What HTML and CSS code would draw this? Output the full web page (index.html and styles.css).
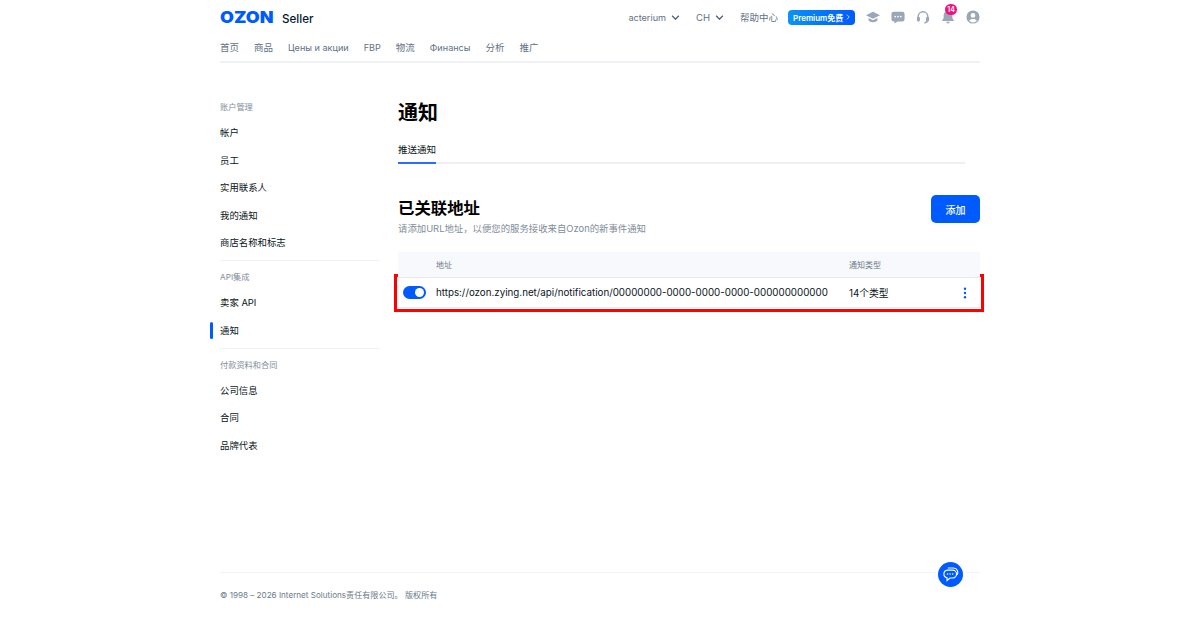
FILE: index.html
```html
<!DOCTYPE html>
<html lang="zh">

<head>
    <meta charset="UTF-8">
    <title>通知</title>
    <link rel="stylesheet" href="styles.css">
</head>

<body>
    <div class="page">
        <header class="top-bar">
            <div class="logo"><span class="logo-ozon">OZON</span><span class="logo-seller">Seller</span></div>
            <div class="top-right">
                <span class="top-link"><span class="latin">acterium</span>
                    <svg class="chevron" viewBox="0 0 10 6"><path d="M1 1l4 4 4-4" /></svg></span>
                <span class="top-link">CH
                    <svg class="chevron" viewBox="0 0 10 6"><path d="M1 1l4 4 4-4" /></svg></span>
                <span class="top-link">帮助中心</span>
                <span class="premium">Premium免费
                    <svg class="premium-arrow" viewBox="0 0 6 10"><path d="M1 1l4 4-4 4" /></svg></span>
                <div class="top-icons">
                    <svg class="top-icon" viewBox="0 0 16 16"><path d="M8 2L0 6l8 4 8-4z" /><path d="M3 9.200v2.600c0 1 2.300 2.200 5 2.200s5-1.200 5-2.200V9.200l-5 2.500z" /></svg>
                    <svg class="top-icon" viewBox="0 0 16 16"><path fill-rule="evenodd" d="M3 2h10a2.500 2.500 0 0 1 2.500 2.500v6A2.500 2.500 0 0 1 13 13H7.500L4 15.500V13H3A2.500 2.500 0 0 1 .5 10.500v-6A2.500 2.500 0 0 1 3 2zM4.800 6.500a1 1 0 1 0 0 2 1 1 0 0 0 0-2zm3.200 0a1 1 0 1 0 0 2 1 1 0 0 0 0-2zm3.200 0a1 1 0 1 0 0 2 1 1 0 0 0 0-2z" /></svg>
                    <svg class="top-icon icon-line" viewBox="0 0 16 16"><path d="M2.500 10V7.500a5.500 5.500 0 0 1 11 0V10" /><path d="M13 12c0 1.500-1.500 2.500-3.500 2.500" /><rect class="icon-solid" x="1" y="8" width="3.500" height="5" rx="1.200" /><rect class="icon-solid" x="11.500" y="8" width="3.500" height="5" rx="1.200" /></svg>
                    <div class="bell">
                        <svg class="top-icon" viewBox="0 0 16 16"><path d="M8 1a5 5 0 0 0-5 5v3.500L1.500 11.500v1h13v-1L13 9.500V6a5 5 0 0 0-5-5z" /><path d="M6 13.500h4a2 2 0 0 1-4 0z" /></svg>
                        <span class="badge">14</span>
                    </div>
                    <svg class="top-icon" viewBox="0 0 16 16"><path fill-rule="evenodd" d="M8 .5a7.500 7.500 0 1 1 0 15A7.500 7.500 0 0 1 8 .5zM8 3.500a2.700 2.700 0 1 0 0 5.400 2.700 2.700 0 0 0 0-5.400zM3.600 12.300a5.800 5.800 0 0 0 8.800 0C11.500 10.900 9.900 10.200 8 10.200s-3.500.7-4.400 2.100z" /></svg>
                </div>
            </div>
        </header>

        <nav class="main-nav">
            <a>首页</a>
            <a>商品</a>
            <a class="latin">Цены и акции</a>
            <a class="latin">FBP</a>
            <a>物流</a>
            <a class="latin">Финансы</a>
            <a>分析</a>
            <a>推广</a>
        </nav>

        <div class="content">
            <aside class="sidebar">
                <div class="side-group">
                    <div class="side-title">账户管理</div>
                    <a class="side-item">帐户</a>
                    <a class="side-item">员工</a>
                    <a class="side-item">实用联系人</a>
                    <a class="side-item">我的通知</a>
                    <a class="side-item">商店名称和标志</a>
                </div>
                <div class="side-group">
                    <div class="side-title">API集成</div>
                    <a class="side-item">卖家 API</a>
                    <a class="side-item side-active">通知</a>
                </div>
                <div class="side-group">
                    <div class="side-title">付款资料和合同</div>
                    <a class="side-item">公司信息</a>
                    <a class="side-item">合同</a>
                    <a class="side-item">品牌代表</a>
                </div>
            </aside>

            <main class="main">
                <h1 class="page-title">通知</h1>
                <div class="tabs"><div class="tab">推送通知</div></div>

                <div class="section-head">
                    <div>
                        <h2 class="section-title">已关联地址</h2>
                        <p class="section-desc">请添加URL地址，以便您的服务接收来自Ozon的新事件通知</p>
                    </div>
                    <button class="add-button">添加</button>
                </div>

                <div class="table-wrap">
                    <div class="highlight"></div>
                    <div class="table-row table-head">
                        <span class="col-switch"></span>
                        <span class="col-url">地址</span>
                        <span class="col-type">通知类型</span>
                    </div>
                    <div class="table-row table-body">
                        <span class="col-switch"><span class="switch"></span></span>
                        <span class="col-url">https://ozon.zying.net/api/notification/00000000-0000-0000-0000-000000000000</span>
                        <span class="col-type">14个类型</span>
                        <svg class="more" viewBox="0 0 4 12"><circle cx="2" cy="1.700" r="1.200" /><circle cx="2" cy="6" r="1.200" /><circle cx="2" cy="10.300" r="1.200" /></svg>
                    </div>
                </div>
            </main>
        </div>

        <footer class="footer">© 1998 – 2026 Internet Solutions责任有限公司。 版权所有</footer>
        <div class="chat-button">
            <svg viewBox="0 0 22 22"><path d="M7.500 6h6a4.500 4.500 0 0 1 0 9H10.500l-3.500 3v-3.100A4.500 4.500 0 0 1 7.500 6z" /><path d="M8 3.500h6.500a5 5 0 0 1 4 8" /><circle cx="7.500" cy="10.500" r=".9" class="dot" /><circle cx="10.500" cy="10.500" r=".9" class="dot" /><circle cx="13.500" cy="10.500" r=".9" class="dot" /></svg>
        </div>
    </div>
</body>

</html>
```
FILE: styles.css
```css
* {
    box-sizing: border-box;
}

body {
    margin: 0;
    background-color: #fff;
    color: #0a1420;
    font-family: Inter, "Noto Sans CJK SC", sans-serif;
    font-size: 9.500px;
}

.page {
    position: relative;
    width: 760px;
    height: 619px;
    margin: 0 auto;
}

.latin {
    font-size: 9.100px;
}

.top-bar {
    display: flex;
    justify-content: space-between;
    align-items: center;
    height: 34px;
}

.logo {
    display: flex;
    align-items: baseline;
    gap: 7px;
}

.logo-ozon {
    width: 55px;
    color: #005bff;
    font-size: 16px;
    font-weight: 900;
    transform: scaleX(1.120);
    transform-origin: left;
}

.logo-seller {
    color: #001a34;
    font-size: 11.600px;
    font-weight: 500;
}

.top-right {
    display: flex;
    align-items: center;
}

.top-link {
    display: flex;
    align-items: center;
    gap: 5px;
    margin-right: 16px;
    color: #5f7285;
    font-size: 9.500px;
}

.top-link:nth-child(3) {
    margin-right: 10px;
}

.chevron {
    width: 9px;
    height: 5px;
    fill: none;
    stroke: #4f6275;
    stroke-width: 1.600;
}

.premium {
    display: flex;
    align-items: center;
    justify-content: space-between;
    width: 67px;
    height: 15px;
    padding: 0 5px;
    border-radius: 4px;
    background: linear-gradient(90deg, #0a93f5, #005bff);
    color: #fff;
    font-size: 8px;
    font-weight: 600;
    white-space: nowrap;
}

.premium-arrow {
    width: 4px;
    height: 6px;
    fill: none;
    stroke: #fff;
    stroke-width: 1.200;
}

.top-icons {
    display: flex;
    align-items: center;
    gap: 11px;
    margin-left: 11px;
}

.top-icon {
    display: block;
    width: 14px;
    height: 14px;
    fill: #9aa7b5;
}

.icon-line path {
    fill: none;
    stroke: #9aa7b5;
    stroke-width: 1.700;
}

.bell {
    position: relative;
}

.badge {
    position: absolute;
    top: -6px;
    left: 4px;
    width: 12px;
    height: 11px;
    border-radius: 6px;
    background-color: #f1117e;
    color: #fff;
    font-size: 7px;
    font-weight: 600;
    line-height: 11px;
    text-align: center;
}

.main-nav {
    display: flex;
    gap: 15px;
    height: 29px;
    padding-top: 7px;
    border-bottom: 2px solid #eff1f4;
    color: #5f7285;
    line-height: 14px;
}

.content {
    display: flex;
}

.sidebar {
    width: 160px;
    margin-right: 18px;
    padding-top: 36px;
}

.side-group {
    margin-bottom: 8px;
    padding-bottom: 3.500px;
    border-bottom: 1px solid #f0f2f5;
}

.side-group:last-child {
    border-bottom: none;
}

.side-title {
    height: 20px;
    color: #808d9a;
    font-size: 8.200px;
    line-height: 16px;
}

.side-item {
    position: relative;
    display: block;
    height: 27.500px;
    color: #0a1420;
    font-size: 9.400px;
    line-height: 27.500px;
}

.side-active::before {
    content: "";
    position: absolute;
    left: -10px;
    top: 5px;
    width: 3px;
    height: 17px;
    border-radius: 2px;
    background-color: #005bff;
}

.main {
    flex: 1;
}

.page-title {
    margin: 36px 0 0;
    color: #000;
    font-size: 20px;
    font-weight: 700;
    line-height: 28px;
}

.tabs {
    width: 567px;
    height: 26px;
    margin-top: 11px;
    border-bottom: 2px solid #eef0f4;
}

.tab {
    width: fit-content;
    height: 26px;
    border-bottom: 2px solid #2a6eff;
    font-size: 9.500px;
    font-weight: 400;
    line-height: 23px;
}

.section-head {
    display: flex;
    justify-content: space-between;
    margin-top: 31px;
}

.section-title {
    margin: 0;
    color: #000;
    font-size: 16.400px;
    font-weight: 700;
    line-height: 26px;
}

.section-desc {
    margin: 0;
    color: #808d9a;
    font-size: 9.400px;
    line-height: 16px;
}

.add-button {
    width: 49px;
    height: 28px;
    border: none;
    border-radius: 5px;
    background-color: #005bff;
    color: #fff;
    font-family: inherit;
    font-size: 10px;
    font-weight: 500;
}

.table-wrap {
    position: relative;
    margin-top: 15px;
}

.highlight {
    position: absolute;
    left: -4px;
    right: -4px;
    top: 22px;
    height: 38px;
    border: 3px solid #f00;
}

.table-row {
    position: relative;
    display: flex;
    align-items: center;
}

.table-head {
    height: 26px;
    padding-bottom: 1px;
    border-bottom: 1px solid #e9ecef;
    background-color: #f8f9fc;
    color: #6b7b8b;
    font-size: 8px;
}

.table-body {
    height: 30px;
    border-bottom: 1px solid #e9ecef;
    background-color: #fff;
    font-size: 9.780px;
}

.col-switch {
    display: flex;
    width: 38px;
    padding-left: 5px;
}

.col-url {
    width: 413px;
    white-space: nowrap;
}

.col-type {
    width: 114px;
}

.switch {
    position: relative;
    width: 23px;
    height: 13px;
    border-radius: 7px;
    background-color: #005bff;
}

.switch::after {
    content: "";
    position: absolute;
    top: 2px;
    right: 2px;
    width: 9px;
    height: 9px;
    border-radius: 50%;
    background-color: #fff;
}

.more {
    width: 4px;
    height: 12px;
    fill: #005bff;
}

.footer {
    position: absolute;
    top: 572px;
    left: 0;
    right: 0;
    height: 30px;
    padding-top: 15px;
    border-top: 1px solid #f2f3f5;
    color: #6b7b8b;
    font-size: 8.100px;
    line-height: 14px;
}

.chat-button {
    position: absolute;
    left: 718px;
    top: 562px;
    display: flex;
    align-items: center;
    justify-content: center;
    width: 25px;
    height: 25px;
    border-radius: 50%;
    background-color: #005bff;
    box-shadow: 0 0 0 3px #fff;
}

.chat-button svg {
    width: 19px;
    height: 19px;
    fill: none;
    stroke: #fff;
    stroke-width: 1.300;
}

.chat-button .dot {
    fill: #fff;
    stroke: none;
}
```
